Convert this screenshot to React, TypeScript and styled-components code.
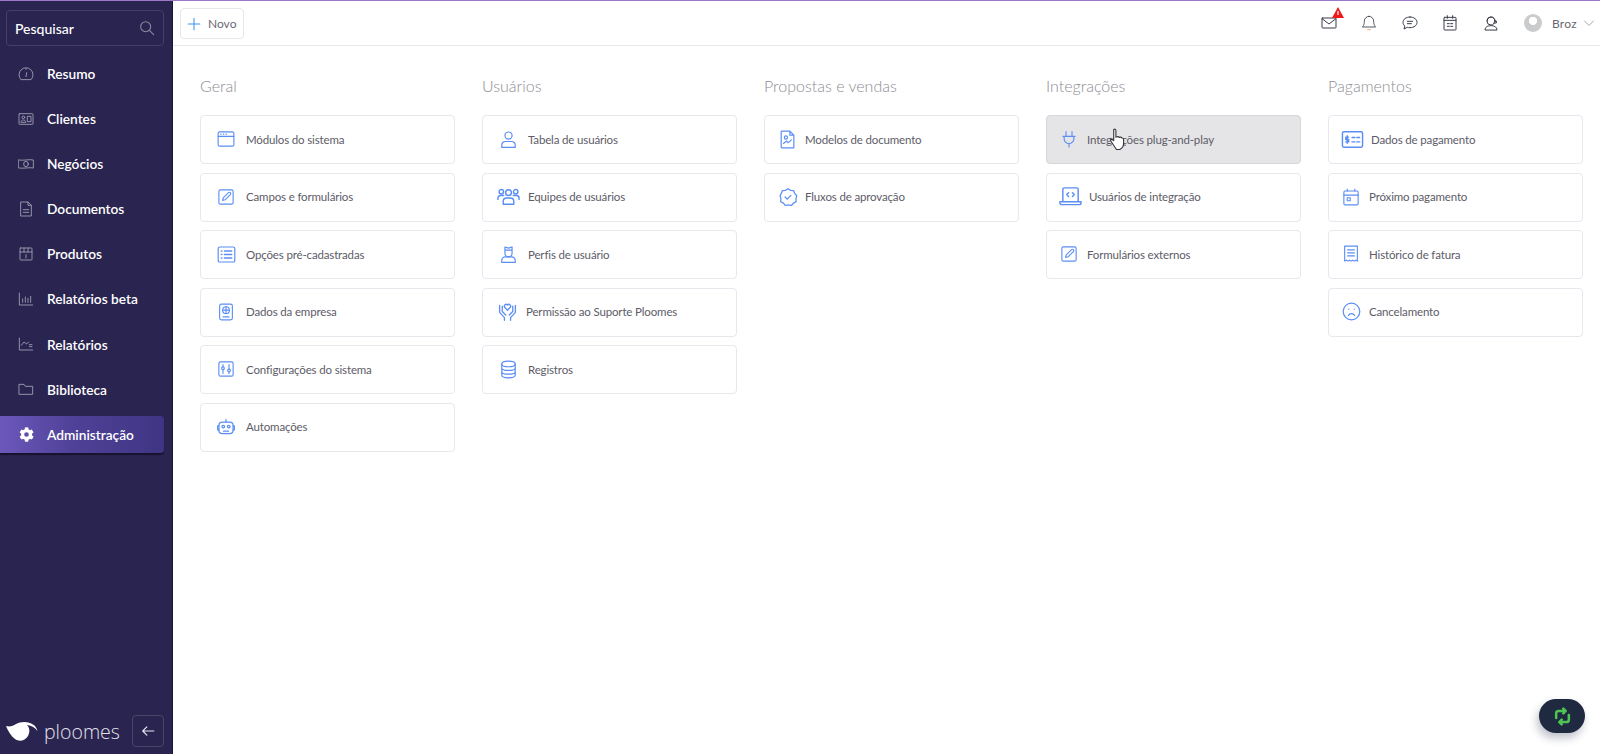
import React from 'react'
import styled, { createGlobalStyle } from 'styled-components'

const GlobalStyle = createGlobalStyle`
  html, body { margin: 0; padding: 0; height: 100%; background: #fff; overflow: hidden; }
  body { font-family: Lato, 'Noto Sans', sans-serif; }
  #root { height: 100%; }
  * { box-sizing: border-box; }
`

const BLUE = '#5b8ef5'

type Svg = { w: number; children: React.ReactNode; color?: string; box?: string; h?: number; sw?: number }
const Ico = ({ w, h, children, color = BLUE, box = '0 0 24 24', sw = 1.5 }: Svg) => (
  <svg width={w} height={h ?? w} viewBox={box} fill="none" stroke={color} strokeWidth={sw} strokeLinecap="round" strokeLinejoin="round">
    {children}
  </svg>
)

const blueIcons: Record<string, { w: number; el: React.ReactNode }> = {
  modules: { w: 18, el: <><rect x="1.5" y="2.5" width="21" height="19" rx="2" /><path d="M1.5 8.5h21M5 5.5h.5M8.5 5.5h.5M12 5.5h.5" /></> },
  fields: { w: 18, el: <><rect x="2.5" y="2.5" width="19" height="19" rx="2" /><path d="M7.5 16.500l.8-3.300 7-7a1.700 1.700 0 0 1 2.500 2.500l-7 7z" /></> },
  options: { w: 19, el: <><rect x="1.5" y="2.5" width="21" height="19" rx="2" /><path d="M9.500 7.500h9M9.500 12h9M9.500 16.500h9M5.500 7.500h.6M5.500 12h.6M5.500 16.500h.6" strokeWidth="2" /></> },
  company: { w: 18, el: <><rect x="3.500" y="1.500" width="17" height="21" rx="2.500" /><circle cx="12" cy="9.500" r="4.500" /><path d="M7.500 9.500h9M12 5v9M8 18.500h8" /></> },
  config: { w: 18, el: <><rect x="2.500" y="2.500" width="19" height="19" rx="2" /><path d="M8 18v-5M8 9V6M16 18v-2M16 12V6" /><circle cx="8" cy="11" r="1.800" /><circle cx="16" cy="14" r="1.800" /></> },
  robot: { w: 20, el: <><rect x="3.500" y="6" width="17" height="14" rx="4" /><path d="M12 6V3M3.500 10.500H2v5h1.500M20.500 10.500H22v5h-1.500M9 17h6" /><circle cx="8.700" cy="11.500" r="1.600" /><circle cx="15.300" cy="11.500" r="1.600" /></> },
  user: { w: 19, el: <><circle cx="12" cy="7" r="4.500" /><path d="M3.500 22v-3a4.500 4.500 0 0 1 4.500-4.500h8a4.500 4.500 0 0 1 4.500 4.500v3z" /></> },
  team: { w: 23, el: <><circle cx="12" cy="8" r="3" /><circle cx="4.500" cy="7" r="2.300" /><circle cx="19.500" cy="7" r="2.300" /><path d="M6.500 20v-3a3.500 3.500 0 0 1 3.500-3.500h4a3.500 3.500 0 0 1 3.500 3.500v3zM1 15v-1.500a2.500 2.500 0 0 1 2.500-2.500H7M23 15v-1.500a2.500 2.500 0 0 0-2.500-2.500H17" /></> },
  profile: { w: 19, el: <><path d="M7.500 2.500l4.500 1.500 4.500-1.500v8a4.500 4.500 0 0 1-9 0zM7.500 6.500h9" /><path d="M3.500 22v-2.500a4.500 4.500 0 0 1 4.500-4.500h8a4.500 4.500 0 0 1 4.500 4.500V22z" /></> },
  hands: { w: 21, el: <><path d="M12 10.500L8.800 7.200a2.100 2.100 0 0 1 3.200-2.700 2.100 2.100 0 0 1 3.200 2.700z" /><path d="M3 5v8l5.500 6v3M21 5v8l-5.500 6v3M6 6v6l4 4M18 6v6l-4 4" /></> },
  db: { w: 19, el: <><ellipse cx="12" cy="5" rx="8.500" ry="3.500" /><path d="M3.500 5v14c0 2 3.800 3.500 8.500 3.500s8.500-1.500 8.500-3.500V5M3.500 9.700c0 2 3.800 3.500 8.500 3.500s8.500-1.500 8.500-3.500M3.500 14.400c0 2 3.800 3.500 8.500 3.500s8.500-1.500 8.500-3.500" /></> },
  doc: { w: 19, el: <><path d="M5 1.500h10l5 5V22.500H5a1 1 0 0 1-1-1v-19a1 1 0 0 1 1-1zM15 1.500v5h5" /><circle cx="10" cy="9.500" r="2" /><path d="M7 17l3.500-3 2.500 2 4-3.500" /></> },
  approval: { w: 20, el: <><path d="M12 2l3 2 3.700.3 1.300 3.400 2.500 2.800-1 3.500.3 3.700-3.300 1.700-2.300 2.800-3.700-.7-3.700.7-2.300-2.800-3.300-1.700.3-3.700-1-3.500L4 7.700l1.300-3.400L9 4z" /><path d="M8.500 12l2.500 2.500 4.500-4.500" /></> },
  plug: { w: 18, el: <><path d="M8 2v6M16 2v6M4 8.500h16M5.500 8.500v3a6.500 6.500 0 0 0 13 0v-3M12 18v4.500" /></> },
  laptop: { w: 23, el: <><path d="M4 17V4.500a1.500 1.500 0 0 1 1.500-1.500h13A1.500 1.500 0 0 1 20 4.500V17M1 17.500h22v1a2 2 0 0 1-2 2H3a2 2 0 0 1-2-2zM10 8l-2 2 2 2M14 8l2 2-2 2" /></> },
  card: { w: 23, el: <><rect x="1.500" y="4" width="21" height="16" rx="1.500" /><path d="M8 9.500H5v2.500h3v2.500H5M6.500 8v8M11.500 10h3M16.500 10h3M11.500 14.500h3M16.500 14.500h3" /></> },
  calendar: { w: 18, el: <><rect x="2.500" y="4" width="19" height="18.500" rx="1.500" /><path d="M2.500 9.500h19M7 1.500V4M17 1.500V4" /><rect x="7" y="13" width="4" height="4" /></> },
  receipt: { w: 18, el: <><path d="M3.500 1.500h17v20l-2.100-1.300-2.100 1.300-2.100-1.300-2.200 1.300-2.100-1.300-2.100 1.300-2.100-1.300-2.100 1.300z" /><path d="M7.500 6.500h9M7.500 10.500h9M7.500 14.500h9" /></> },
  sad: { w: 19, el: <><circle cx="12" cy="12" r="10.500" /><path d="M8 17c1-1.600 2.400-2.300 4-2.300s3 .7 4 2.300M8.500 9h.1M15.500 9h.1" /></> },
}

const SIDE = '#a5a2b6'
const sideIcons: Record<string, React.ReactNode> = {
  Resumo: <><path d="M4 20a10.500 10.500 0 1 1 16 0z" /><path d="M12 16l1-6M12 4v1" /></>,
  Clientes: <><rect x="1.500" y="4" width="21" height="16" rx="1" /><circle cx="8" cy="9.500" r="2" /><path d="M4.500 16.500c0-2 1.500-3 3.500-3s3.500 1 3.500 3zM14.500 8h5v8h-5z" /></>,
  'Negócios': <><path d="M1 6c5 1.500 17-1.500 22 0v12c-5-1.500-17 1.500-22 0z" /><ellipse cx="12" cy="12" rx="3.500" ry="4" /></>,
  Documentos: <><path d="M5 1.500h10l5 5v16H4v-20.500zM15 1.500v5h5M8 13h8M8 17h8" /></>,
  Produtos: <><rect x="3" y="3" width="18" height="18" rx="1" /><path d="M3 9h18M9 3v6M15 3v6M12 13v5" /></>,
  'Relatórios beta': <><path d="M2 3v18h20M7 17v-5M11 17V9M15 17v-6M19 17V8" /></>,
  'Relatórios': <><path d="M2 3v18h20M5 14l4-5 4 3 3-3M17 16h4M17 13h4" /></>,
  Biblioteca: <path d="M2 5h7l2 3h11v12H2z" />,
}
const Gear = () => (
  <svg width="15" height="15" viewBox="0 0 512 512" fill="#fff">
    <path d="M487 316l-42-25a190 190 0 0 0 0-70l42-25c5-3 7-8 5-14-11-35-29-66-54-92-4-4-10-5-14-2l-42 24a188 188 0 0 0-60-35V29c0-6-4-10-9-11a226 226 0 0 0-106 0c-5 1-9 5-9 11v48c-22 8-43 20-60 35L96 88c-5-3-11-2-14 2-25 26-43 57-54 92-2 6 0 11 5 14l42 25a190 190 0 0 0 0 70l-42 25c-5 3-7 8-5 14 11 35 29 66 54 92 3 4 9 5 14 2l42-24c17 15 38 27 60 35v48c0 6 4 10 9 11 36 8 72 8 106 0 5-1 9-5 9-11v-48c22-8 43-20 60-35l42 24c4 3 10 2 14-2 25-26 43-57 54-92 2-6 0-11-5-14zM256 336a80 80 0 1 1 0-160 80 80 0 0 1 0 160z" />
  </svg>
)

type Item = { label: string; icon: string; center: number; text: number }
const columns: { title: string; items: Item[] }[] = [
  { title: 'Geral', items: [
    { label: 'Módulos do sistema', icon: 'modules', center: 26, text: 46 },
    { label: 'Campos e formulários', icon: 'fields', center: 26, text: 46 },
    { label: 'Opções pré-cadastradas', icon: 'options', center: 26, text: 46 },
    { label: 'Dados da empresa', icon: 'company', center: 26, text: 46 },
    { label: 'Configurações do sistema', icon: 'config', center: 26, text: 46 },
    { label: 'Automações', icon: 'robot', center: 26, text: 46 },
  ] },
  { title: 'Usuários', items: [
    { label: 'Tabela de usuários', icon: 'user', center: 26, text: 46 },
    { label: 'Equipes de usuários', icon: 'team', center: 26, text: 46 },
    { label: 'Perfis de usuário', icon: 'profile', center: 26, text: 46 },
    { label: 'Permissão ao Suporte Ploomes', icon: 'hands', center: 25, text: 44 },
    { label: 'Registros', icon: 'db', center: 26, text: 46 },
  ] },
  { title: 'Propostas e vendas', items: [
    { label: 'Modelos de documento', icon: 'doc', center: 23, text: 41 },
    { label: 'Fluxos de aprovação', icon: 'approval', center: 24, text: 41 },
  ] },
  { title: 'Integrações', items: [
    { label: 'Integrações plug-and-play', icon: 'plug', center: 23, text: 41 },
    { label: 'Usuários de integração', icon: 'laptop', center: 24, text: 43 },
    { label: 'Formulários externos', icon: 'fields', center: 23, text: 41 },
  ] },
  { title: 'Pagamentos', items: [
    { label: 'Dados de pagamento', icon: 'card', center: 24, text: 43 },
    { label: 'Próximo pagamento', icon: 'calendar', center: 23, text: 41 },
    { label: 'Histórico de fatura', icon: 'receipt', center: 23, text: 41 },
    { label: 'Cancelamento', icon: 'sad', center: 23, text: 41 },
  ] },
]

const Page = styled.div`
  display: flex;
  height: 100vh;
  border-top: 1px solid #9b78c6;
`
const Sidebar = styled.aside`
  width: 173px;
  flex: none;
  display: flex;
  flex-direction: column;
  background: #2a2450;
  border-right: 1px solid #191537;
  padding: 9px 0 7px;
`
const Search = styled.div`
  margin: 0 8px 0 6px;
  height: 36px;
  display: flex;
  align-items: center;
  justify-content: space-between;
  padding: 0 8px;
  border: 1px solid #453e68;
  border-radius: 4px;
  color: #fff;
  font-size: 14px;
  font-weight: 500;
`
const Nav = styled.nav`
  display: flex;
  flex-direction: column;
  margin-top: 9px;
`
const NavItem = styled.div<{ $active?: boolean }>`
  height: 37px;
  margin: 0 8px 8.1px 0;
  padding-left: 18px;
  display: flex;
  align-items: center;
  gap: 13px;
  color: #fff;
  font-size: 13.700px;
  font-weight: 600;
  border-radius: 0 4px 4px 0;
  background: ${p => (p.$active ? 'linear-gradient(90deg, #6c58bb 0%, #4f4197 45%, #3f3584 100%)' : 'transparent')};
  box-shadow: ${p => (p.$active ? '0 2px 1px #17132f' : 'none')};
`
const NavIcon = styled.span`
  width: 16px;
  display: flex;
  justify-content: center;
`
const SideFooter = styled.div`
  margin-top: auto;
  display: flex;
  align-items: center;
  padding: 0 8px 0 6px;
`
const Brand = styled.span`
  margin-left: 6px;
  color: #e4e2ee;
  font-size: 19.500px;
  font-weight: 300;
  font-family: 'Open Sans', sans-serif;
`
const Collapse = styled.button`
  margin-left: auto;
  width: 32px;
  height: 32px;
  padding: 0;
  display: flex;
  align-items: center;
  justify-content: center;
  background: transparent;
  border: 1px solid #4e4469;
  border-radius: 4px;
`
const Main = styled.main`
  flex: 1;
  min-width: 0;
  display: flex;
  flex-direction: column;
`
const Topbar = styled.header`
  height: 45px;
  flex: none;
  display: flex;
  align-items: center;
  justify-content: space-between;
  padding: 0 0 0 7px;
  border-bottom: 1px solid #e7e8ec;
`
const NewButton = styled.button`
  width: 64px;
  height: 31px;
  margin-top: 1px;
  display: flex;
  align-items: center;
  gap: 7px;
  padding: 0 0 0 6px;
  background: #fff;
  border: 1px solid #e5e7ec;
  border-radius: 4px;
  color: #6a6a75;
  font: 400 12px Lato, sans-serif;
`
const TopActions = styled.div`
  display: flex;
  align-items: center;
`
const TopIcon = styled.span`
  position: relative;
  width: 40.500px;
  display: flex;
  justify-content: center;
`
const Badge = styled.span`
  position: absolute;
  left: 24px;
  top: -8px;
  display: flex;
`
const Avatar = styled.span`
  width: 18px;
  height: 18px;
  margin-left: 13px;
  border-radius: 50%;
  background: radial-gradient(circle at 50% 38%, #fff 0 28%, #c9cbcd 30%);
`
const UserName = styled.span`
  margin-left: 10px;
  color: #666672;
  font-size: 12px;
  letter-spacing: 0.3px;
`
const Chevron = styled.span`
  margin: 0 5px 0 6px;
  display: flex;
`
const Columns = styled.div`
  display: grid;
  grid-template-columns: repeat(5, 255px);
  column-gap: 27px;
  padding: 29px 0 0 27px;
`
const Column = styled.section`
  display: flex;
  flex-direction: column;
`
const ColumnTitle = styled.h2`
  margin: 0 0 19px;
  height: 21px;
  line-height: 21px;
  color: #8d8d94;
  font-size: 16px;
  font-weight: 300;
`
const Cards = styled.div`
  display: flex;
  flex-direction: column;
  gap: 8.500px;
`
const Card = styled.div<{ $hover?: boolean }>`
  position: relative;
  height: 49px;
  display: flex;
  align-items: center;
  padding-bottom: 1px;
  border: 1px solid ${p => (p.$hover ? '#d6d7da' : '#e6e8ee')};
  border-radius: 4px;
  background-color: ${p => (p.$hover ? '#e5e5e7' : '#fff')};
  background-image: ${p => (p.$hover ? 'radial-gradient(#d2d3d8 0.6px, transparent 0.7px)' : 'none')};
  background-size: 4px 4px;
  color: #5d5c68;
  font-size: 11.500px;
  letter-spacing: -0.15px;
`
const IconSlot = styled.span<{ $left: number; $width: number }>`
  display: flex;
  flex: none;
  width: ${p => p.$width}px;
  padding-left: ${p => p.$left}px;
`
const Cursor = styled.span`
  position: absolute;
  left: 62px;
  top: 12px;
  display: flex;
`
const Float = styled.div`
  position: fixed;
  right: 15px;
  bottom: 21px;
  width: 46px;
  height: 34px;
  display: flex;
  align-items: center;
  justify-content: center;
  border-radius: 17px;
  background: #1f2a40;
  box-shadow: -2px 5px 8px rgba(40, 50, 80, 0.3);
`

export default function App() {
  return (
    <Page>
      <GlobalStyle />
      <Sidebar>
        <Search>
          Pesquisar
          <Ico w={16} color="#8d8aa0" sw={1.600}><circle cx="10" cy="10" r="7.500" /><path d="M16 16l6 6" /></Ico>
        </Search>
        <Nav>
          {Object.entries(sideIcons).map(([label, el]) => (
            <NavItem key={label}>
              <NavIcon><Ico w={16} color={SIDE} sw={1.300}>{el}</Ico></NavIcon>
              {label}
            </NavItem>
          ))}
          <NavItem $active>
            <NavIcon><Gear /></NavIcon>
            Administração
          </NavItem>
        </Nav>
        <SideFooter>
          <svg width="32" height="21" viewBox="0 0 32 21">
            <path d="M0 5C4 6 7 5 10 3C15 0 24 0 29 5C30 6.500 31 8 31.500 10C29 7 26 4.500 21 4C24 7 24 11 22 15C19 20 13 21 9 18C5 15 2 10 0 5z" fill="#fff" />
          </svg>
          <Brand>ploomes</Brand>
          <Collapse>
            <Ico w={14} color="#e8e6f0" sw={2}><path d="M22 12H3M10 5l-7 7 7 7" /></Ico>
          </Collapse>
        </SideFooter>
      </Sidebar>
      <Main>
        <Topbar>
          <NewButton>
            <Ico w={14} color="#3f93f2" sw={1.800}><path d="M12 2v20M2 12h20" /></Ico>
            Novo
          </NewButton>
          <TopActions>
            <TopIcon>
              <Ico w={16} color="#3a3d4a"><rect x="1.500" y="4.500" width="21" height="15" rx="1" /><path d="M1.500 5.500l10.500 8 10.500-8" /></Ico>
              <Badge>
                <svg width="12" height="11" viewBox="0 0 12 11">
                  <path d="M6 0l6 11H0z" fill="#f01818" />
                  <path d="M6 4v4" stroke="#fff" strokeWidth="1.200" />
                </svg>
              </Badge>
            </TopIcon>
            <TopIcon>
              <Ico w={16} color="#3a3d4a" sw={1.300}><path d="M12 2a7 7 0 0 0-7 7c0 6-2 8-3 9h20c-1-1-3-3-3-9a7 7 0 0 0-7-7z" /><path d="M10 22h4" stroke="#e09a5a" /></Ico>
            </TopIcon>
            <TopIcon>
              <Ico w={16} color="#3a3d4a"><path d="M12 3c6 0 10.500 3.500 10.500 8s-4.500 8-10.500 8c-1.500 0-2.500-.2-4-.6L3 21l1.200-4.500C2.500 15 1.500 13 1.500 11c0-4.500 4.500-8 10.500-8zM8 9.500h8M8 13h6" /></Ico>
            </TopIcon>
            <TopIcon>
              <Ico w={16} color="#3a3d4a"><rect x="3" y="3.500" width="18" height="19" rx="1" /><path d="M3 8h18M8 1v4M16 1v4M8 13h3M13 13h3M8 17h3M13 17h3" /></Ico>
            </TopIcon>
            <TopIcon>
              <Ico w={16} color="#3a3d4a"><circle cx="12" cy="9" r="6" /><path d="M6 9a6 6 0 0 1 12 0M3 22c0-4 4-6 9-6s9 2 9 6zM18 9h2v3h-4" /></Ico>
            </TopIcon>
            <Avatar />
            <UserName>Broz</UserName>
            <Chevron>
              <Ico w={12} color="#8a8a92" sw={1.500}><path d="M3 8l9 9 9-9" /></Ico>
            </Chevron>
          </TopActions>
        </Topbar>
        <Columns>
          {columns.map(col => (
            <Column key={col.title}>
              <ColumnTitle>{col.title}</ColumnTitle>
              <Cards>
                {col.items.map(item => {
                  const icon = blueIcons[item.icon]
                  const hover = item.icon === 'plug'
                  return (
                    <Card key={item.label} $hover={hover}>
                      <IconSlot $left={item.center - icon.w / 2 - 1} $width={item.text - 1}>
                        <Ico w={icon.w}>{icon.el}</Ico>
                      </IconSlot>
                      {item.label}
                      {hover && (
                        <Cursor>
                          <svg width="16" height="22" viewBox="0 0 14 20">
                            <path d="M4 1.500c.8-.8 2-.5 2 .8v6c1.200-.6 2.500-.5 3 .2 1-.3 2-.2 2.500.6.800 0 1.500.5 1.500 1.400v3.500c0 2.500-1.500 4.500-3.500 5.500H6.500L1.500 12c-.8-1-.2-2 1-1.500l1.500 1V2.300z" fill="#fff" stroke="#34343c" strokeWidth="1" strokeLinejoin="round" />
                          </svg>
                        </Cursor>
                      )}
                    </Card>
                  )
                })}
              </Cards>
            </Column>
          ))}
        </Columns>
      </Main>
      <Float>
        <Ico w={19} color="#4ec552" sw={3.200}>
          <path d="M4 14V8a3 3 0 0 1 3-3h8M20 10v6a3 3 0 0 1-3 3H9M13 2l3 3-3 3M11 16l-3 3 3 3" />
        </Ico>
      </Float>
    </Page>
  )
}
